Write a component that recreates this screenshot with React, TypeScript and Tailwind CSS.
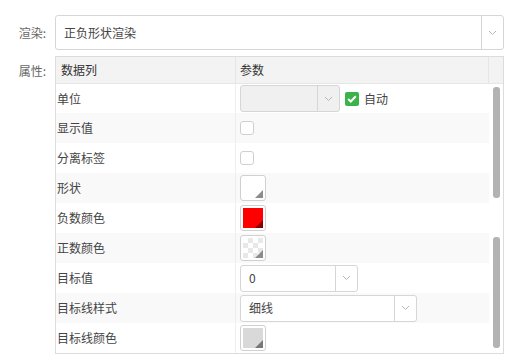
import React from 'react'

const font = { fontFamily: '"Noto Sans CJK SC", "Noto Sans", sans-serif' }

function Chevron() {
  return (
    <svg width="9" height="6" viewBox="0 0 9 6" className="block">
      <polyline points="1,1 4.5,4.5 8,1" fill="none" stroke="#b5b5b5" strokeWidth="1" />
    </svg>
  )
}

function Select({ width, value, disabled }: { width: string; value?: string; disabled?: boolean }) {
  return (
    <div
      className={`${width} h-[27px] flex border border-[#d6d6d6] rounded-[3px] ${disabled ? 'bg-[#f0f0f0]' : 'bg-white'}`}
    >
      <div className="flex-1 flex items-center pl-[8px] text-[12px] text-[#444]">{value}</div>
      <div className="w-[22px] border-l border-[#d6d6d6] flex items-center justify-center">
        <Chevron />
      </div>
    </div>
  )
}

function Checkbox({ checked }: { checked?: boolean }) {
  if (checked) {
    return (
      <div className="w-[14px] h-[14px] rounded-[2px] bg-[#3bb34a] flex items-center justify-center">
        <svg width="10" height="8" viewBox="0 0 10 8">
          <polyline points="1.2,4 3.8,6.5 8.8,1.3" fill="none" stroke="#fff" strokeWidth="2" />
        </svg>
      </div>
    )
  }
  return <div className="w-[14px] h-[14px] rounded-[3px] border border-[#cfcfcf] bg-white" />
}

function Swatch({ fill, corner, checker }: { fill: string; corner: string; checker?: boolean }) {
  return (
    <div className="relative w-[26px] h-[26px] rounded-[3px] border border-[#d0d0d0] bg-white p-[2px]">
      {checker ? (
        <div className="w-full h-full bg-[conic-gradient(#e8e8e8_90deg,#ffffff_90deg_180deg,#e8e8e8_180deg_270deg,#ffffff_270deg)] bg-[length:10px_10px]" />
      ) : (
        <div className={`w-full h-full ${fill}`} />
      )}
      <svg width="8" height="8" viewBox="0 0 8 8" className="absolute right-[2px] bottom-[2px]">
        <polygon points="8,0 8,8 0,8" fill={corner} />
      </svg>
    </div>
  )
}

const rows: { label: string; control: React.ReactNode }[] = [
  {
    label: '单位',
    control: (
      <div className="flex items-center gap-[5px]">
        <Select width="w-[100px]" disabled />
        <Checkbox checked />
        <span className="text-[12px] text-[#444]">自动</span>
      </div>
    ),
  },
  { label: '显示值', control: <Checkbox /> },
  { label: '分离标签', control: <Checkbox /> },
  { label: '形状', control: <Swatch fill="bg-white" corner="#8c8c8c" /> },
  { label: '负数颜色', control: <Swatch fill="bg-[#ff0000]" corner="#8a0000" /> },
  { label: '正数颜色', control: <Swatch fill="" corner="#8c8c8c" checker /> },
  { label: '目标值', control: <Select width="w-[118px]" value="0" /> },
  { label: '目标线样式', control: <Select width="w-[177px]" value="细线" /> },
  { label: '目标线颜色', control: <Swatch fill="bg-[#d9d9d9]" corner="#777" /> },
]

export default function App() {
  return (
    <div className="w-[513px] h-[361px] bg-white pt-[15px]" style={font}>
      {/* 渲染 */}
      <div className="flex items-center">
        <div className="w-[46px] text-right text-[12px] text-[#666] mr-[9px]">渲染:</div>
        <div className="w-[449px] h-[35px] flex border border-[#d6d6d6] rounded-[3px] bg-white">
          <div className="flex-1 flex items-center pl-[8px] text-[12px] text-[#444]">正负形状渲染</div>
          <div className="w-[22px] border-l border-[#d6d6d6] flex items-center justify-center">
            <Chevron />
          </div>
        </div>
      </div>

      {/* 属性 */}
      <div className="flex mt-[6px]">
        <div className="w-[46px] text-right text-[12px] text-[#666] mr-[9px] pt-[6px]">属性:</div>
        <div className="w-[449px] h-[298px] border border-[#dcdcdc] flex flex-col text-[12px]">
          <div className="h-[27px] flex bg-[#f3f3f3] border-b border-[#e6e6e6] text-[#333]">
            <div className="w-[180px] border-r border-[#e6e6e6] flex items-center pl-[5px]">数据列</div>
            <div className="w-[253px] border-r border-[#e6e6e6] flex items-center pl-[4px]">参数</div>
            <div className="flex-1" />
          </div>
          <div className="flex flex-1">
            <div className="w-[433px] flex flex-col">
              {rows.map((r, i) => (
                <div
                  key={r.label}
                  className={`${i === 0 ? 'h-[29px]' : 'h-[30px]'} flex ${i % 2 === 1 ? 'bg-[#f9f9f9]' : 'bg-white'}`}
                >
                  <div className="w-[180px] border-r border-[#eeeeee] flex items-center pl-[1px] text-[#444]">
                    {r.label}
                  </div>
                  <div className="flex-1 flex items-center pl-[4px]">{r.control}</div>
                </div>
              ))}
            </div>
            <div className="flex-1 flex flex-col pl-[4px] pt-[3px] gap-[39px]">
              <div className="w-[7px] h-[111px] rounded-[3px] bg-[#b3b3b3]" />
              <div className="w-[7px] h-[111px] rounded-[3px] bg-[#b3b3b3]" />
            </div>
          </div>
        </div>
      </div>
    </div>
  )
}
